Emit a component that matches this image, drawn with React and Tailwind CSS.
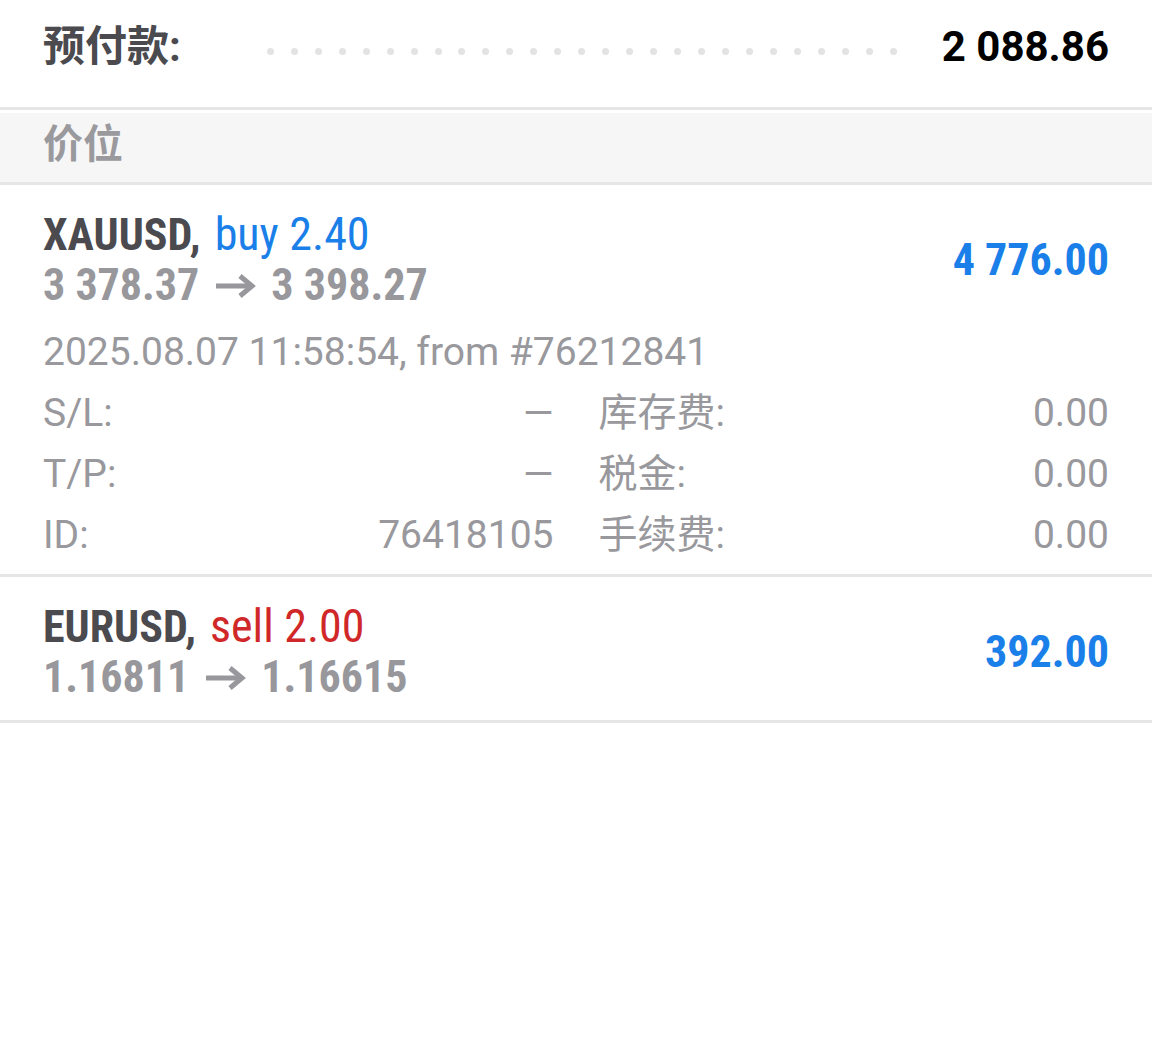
import React from 'react';

const cond = "font-['Roboto_Condensed','Liberation_Sans_Narrow',Roboto,sans-serif] [font-stretch:condensed]";
const roboto = "font-['Roboto','Noto_Sans_CJK_SC',sans-serif]";

function Dots() {
    return (
        <div className="flex-1 flex justify-between items-center ml-[86px] mr-[45px] mt-[26px]">
            {Array.from({ length: 27 }).map((_, i) => (
                <span key={i} className="w-[7px] h-[7px] rounded-full bg-[#e3e3e3]" />
            ))}
        </div>
    );
}

function Arrow() {
    return (
        <svg className="mx-[15px] shrink-0" width="42" height="26" viewBox="0 0 42 26" fill="none">
            <path d="M2 13H38" stroke="#97979c" strokeWidth="5" />
            <path d="M26 3L38 13L26 23" stroke="#97979c" strokeWidth="5" strokeLinejoin="miter" />
        </svg>
    );
}

function Position({ symbol, side, volume, open, close, profit, children }) {
    const sideColor = side === 'buy' ? 'text-[#1a7fe8]' : 'text-[#d02828]';
    return (
        <div className="px-[43px] pt-[24px] border-b-[3px] border-[#e6e6e6]">
            <div className="flex items-center justify-between">
                <div className={`${cond} text-[44px] leading-[51px]`}>
                    <div className="h-[51px]">
                        <span className="font-bold text-[#4a4a4f]">{symbol},</span>{' '}
                        <span className={`${sideColor} text-[46px] ml-[4px]`}>{side} {volume}</span>
                    </div>
                    <div className="flex items-center font-bold text-[#97979c]">
                        <span>{open}</span>
                        <Arrow />
                        <span>{close}</span>
                    </div>
                </div>
                <div className={`${cond} font-bold text-[44px] leading-[51px] text-[#1a7fe8]`}>{profit}</div>
            </div>
            {children}
        </div>
    );
}

function Detail({ label, value }) {
    return (
        <div className="flex justify-between">
            <span>{label}</span>
            <span>{value}</span>
        </div>
    );
}

export default function App() {
    return (
        <div className={`${roboto} bg-white w-[1152px] h-[1041px]`}>
            <div className="h-[107px] flex items-start px-[43px] pt-[22px] leading-[50px]">
                <span className="text-[42px] font-bold text-[#4a4a4f]">预付款:</span>
                <Dots />
                <span className="text-[42px] font-bold text-black">2 088.86</span>
            </div>
            <div className="border-t-[3px] border-[#e6e6e6] pt-[3px]">
                <div className="h-[69px] bg-[#f6f6f6] px-[43px] flex items-center">
                    <span className="text-[40px] font-bold text-[#9a9a9e] leading-[50px] -mt-[6px]">价位</span>
                </div>
            </div>
            <div className="border-t-[3px] border-[#e6e6e6]">
                <Position symbol="XAUUSD" side="buy" volume="2.40" open="3 378.37" close="3 398.27" profit="4 776.00">
                    <div className="mt-[11px] pb-[8px] text-[39px] leading-[61px] text-[#98989d]">
                        <div>2025.08.07 11:58:54, from #76212841</div>
                        <div className="grid grid-cols-2 gap-x-[45px]">
                            <Detail label="S/L:" value="—" />
                            <Detail label="库存费:" value="0.00" />
                            <Detail label="T/P:" value="—" />
                            <Detail label="税金:" value="0.00" />
                            <Detail label="ID:" value="76418105" />
                            <Detail label="手续费:" value="0.00" />
                        </div>
                    </div>
                </Position>
                <Position symbol="EURUSD" side="sell" volume="2.00" open="1.16811" close="1.16615" profit="392.00">
                    <div className="h-[17px]" />
                </Position>
            </div>
        </div>
    );
}
